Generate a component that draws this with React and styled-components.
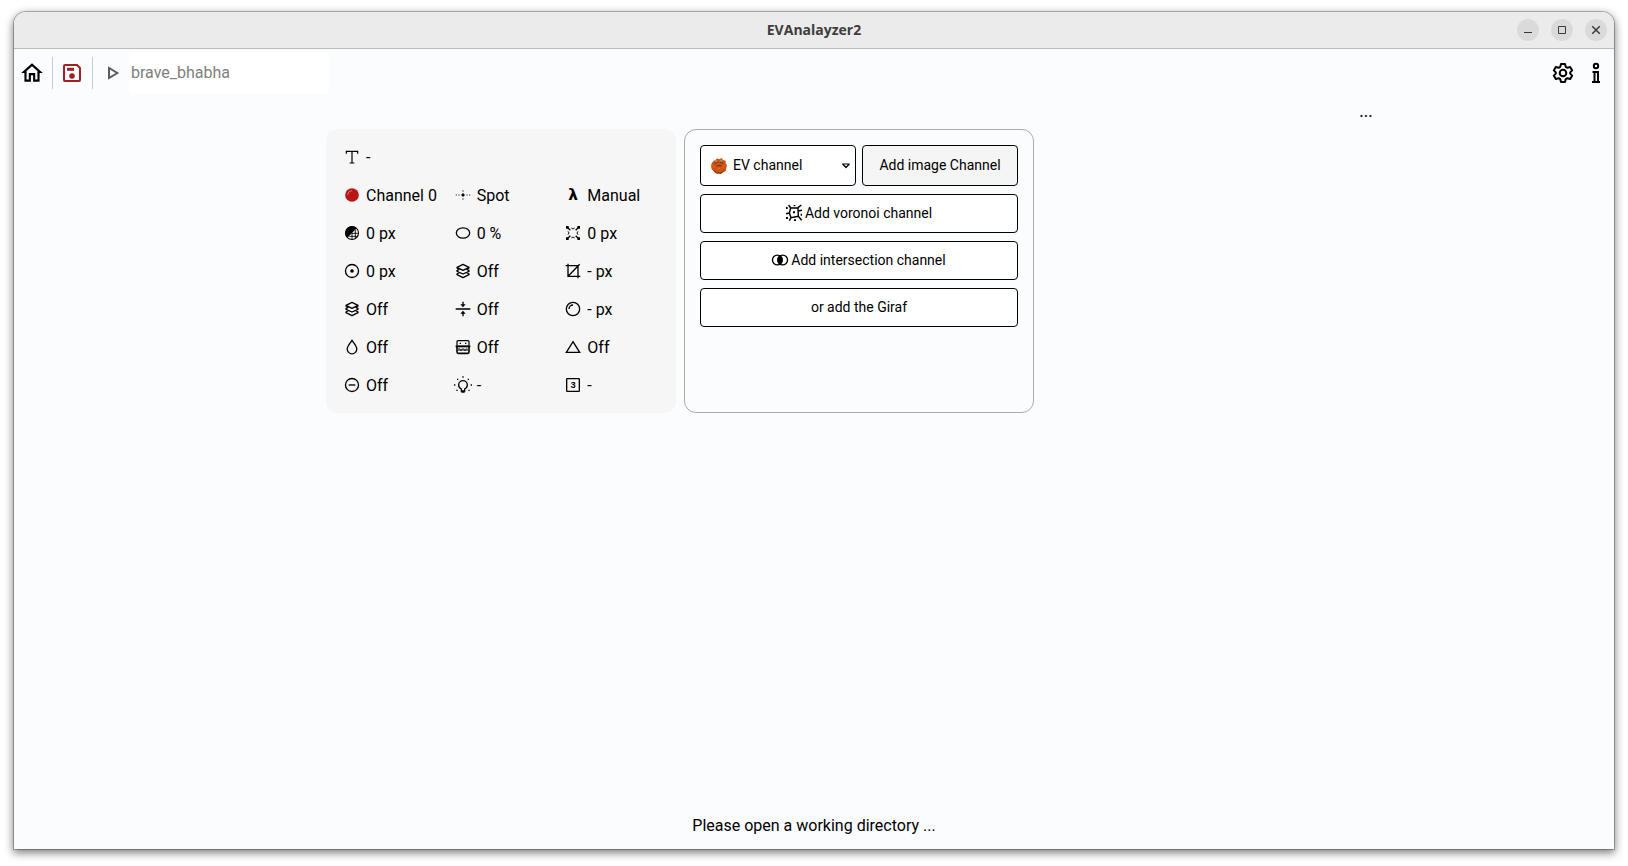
import React from "react";
import styled, { createGlobalStyle } from "styled-components";

const GlobalStyle = createGlobalStyle`
  *, *::before, *::after { box-sizing: border-box; }
  html, body, #root { height: 100%; }
  body { margin: 0; background: #fff; color: #000; font-family: Roboto, "Liberation Sans", sans-serif; font-size: 16px; }
  button, input, select { font: inherit; color: inherit; }
`;

const Desktop = styled.div`
  min-height: 100%;
  padding: 12px 14px 17px;
  display: flex;
`;

const Window = styled.div`
  flex: 1;
  display: flex;
  flex-direction: column;
  background: #fbfcfe;
  border-radius: 12px 12px 0 0;
  box-shadow: 0 0 0 1px rgba(0, 0, 0, 0.25), 0 3px 9px 1px rgba(0, 0, 0, 0.5);
`;

const TitleBar = styled.header`
  display: grid;
  grid-template-columns: 1fr auto 1fr;
  align-items: center;
  height: 37px;
  padding: 0 7px;
  background: #ebebeb;
  border-bottom: 1px solid #bcbcbc;
  border-radius: 12px 12px 0 0;
`;

const WindowTitle = styled.h1`
  grid-column: 2;
  margin: 0;
  font: 700 14px/20px "Open Sans", "Noto Sans", sans-serif;
  color: #3d3d3d;
`;

const WindowControls = styled.div`
  display: flex;
  justify-content: flex-end;
  gap: 12px;
`;

const WindowButton = styled.button`
  display: grid;
  place-items: center;
  width: 22px;
  height: 22px;
  padding: 0;
  border: 0;
  border-radius: 50%;
  background: #dadada;
  color: #3a3a3a;
`;

const Toolbar = styled.nav`
  display: flex;
  align-items: center;
  height: 47px;
`;

const ToolButton = styled.button`
  display: grid;
  place-items: center;
  width: ${(p) => p.$width || 38}px;
  height: 32px;
  padding: 0 ${(p) => (p.$divided ? 2 : 0)}px 0 0;
  border: 0;
  border-right: ${(p) => (p.$divided ? "1px solid #ccc" : "0")};
  background: none;
  color: ${(p) => p.$color || "#000"};
`;

const NameInput = styled.input`
  width: 200px;
  height: 41px;
  padding: 0 2px;
  border: 0;
  border-radius: 4px;
  background: #fff;
  &::placeholder { color: #808080; opacity: 1; }
`;

const Spacer = styled.div`
  flex: 1;
`;

const Workspace = styled.main`
  flex: 1;
  display: grid;
  grid-template-columns: 312px minmax(0, 1fr) 496px;
  padding-top: 8px;
`;

const Cards = styled.section`
  grid-column: 2;
  display: flex;
  flex-wrap: wrap;
  align-content: flex-start;
  gap: 8px;
  padding-top: 25px;
`;

const SidePanel = styled.aside`
  text-align: center;
  color: #223;
  font-weight: 500;
  line-height: 16px;
`;

const ChannelCard = styled.article`
  width: 350px;
  height: 284px;
  padding: 9px 0 9px 18px;
  border-radius: 12px;
  background: #f6f6f6;
`;

const Properties = styled.ul`
  display: grid;
  grid-template-columns: repeat(3, 1fr);
  grid-auto-rows: 38px;
  align-items: center;
  margin: 0;
  padding: 0;
  list-style: none;
`;

const Property = styled.li`
  grid-column: ${(p) => (p.$wide ? "1 / -1" : "auto")};
  display: flex;
  align-items: center;
  gap: 6px;
  white-space: nowrap;
`;

const AddCard = styled.form`
  display: flex;
  flex-direction: column;
  gap: 8px;
  width: 350px;
  height: 284px;
  padding: 15px;
  border: 1px solid #a9abad;
  border-radius: 12px;
  font-size: 14px;
`;

const Pair = styled.div`
  display: grid;
  grid-template-columns: 1fr 1fr;
  gap: 6px;
  height: 41px;
`;

const ActionButton = styled.button`
  display: flex;
  align-items: center;
  justify-content: center;
  gap: 3px;
  height: ${(p) => (p.$shaded ? 41 : 39)}px;
  padding: 0 0 2px;
  border: 1px solid #000;
  border-radius: 4px;
  background: ${(p) => (p.$shaded ? "#f5f5f5" : "#fff")};
`;

const SelectBox = styled.div`
  position: relative;
`;

const Select = styled.select`
  appearance: none;
  width: 100%;
  height: 100%;
  padding: 0 24px 2px 32px;
  border: 1px solid #000;
  border-radius: 4px;
  background: #fff;
`;

const SelectMark = styled.span`
  position: absolute;
  top: 0;
  bottom: 0;
  ${(p) => p.$side}: ${(p) => (p.$side === "left" ? 11 : 6)}px;
  display: flex;
  align-items: center;
  pointer-events: none;
`;

const Status = styled.footer`
  padding: 0 16px 13px;
  text-align: center;
  line-height: 20px;
`;

const Svg = styled.svg`
  display: block;
  flex: none;
  overflow: visible;
`;

const Icon = ({ size = 16, sw = 2, fill = "none", children }) => (
  <Svg width={size} height={size} viewBox="0 0 24 24" fill={fill} stroke={fill === "none" ? "currentColor" : "none"} strokeWidth={sw} aria-hidden="true">
    {children}
  </Svg>
);

const icons = {
  text: (
    <Icon sw={1.8}>
      <path d="M3.5 7V3.5H20.5V7M12 3.5V21M8.5 21H15.5" />
    </Icon>
  ),
  ball: (
    <Icon>
      <circle cx="12" cy="12" r="10.3" fill="#b71717" stroke="none" />
      <path d="M5.3 11.5A7 7 0 0 1 11.5 5.3" stroke="#e07070" strokeWidth="1.5" strokeLinecap="round" />
    </Icon>
  ),
  spot: (
    <Icon>
      <path d="M1 12H3M5 12H7M9 12H15M17 12H19M21 12H23M12 5V7M12 9V15M12 17V19" strokeWidth="1.6" opacity=".75" />
      <circle cx="12" cy="12" r="2" fill="currentColor" stroke="none" />
    </Icon>
  ),
  lambda: (
    <Icon fill="currentColor">
      <text x="12" y="20" textAnchor="middle" fontFamily="DejaVu Sans, sans-serif" fontWeight="700" fontSize="23">λ</text>
    </Icon>
  ),
  threshold: (
    <Icon>
      <circle cx="12" cy="12" r="9.8" strokeWidth="1.6" />
      <path d="M19 5A9.9 9.9 0 1 0 5 19Z" fill="currentColor" stroke="none" />
      <path d="M17 7V20M12 12V21.5M8 17H20.5M12 12.5H21.5" strokeWidth="1.3" />
    </Icon>
  ),
  ellipse: (
    <Icon>
      <ellipse cx="12" cy="12" rx="10" ry="7.8" />
    </Icon>
  ),
  snap: (
    <Icon>
      <path d="M3 3L8 8M21 3L16 8M3 21L8 16M21 21L16 16" strokeWidth="2" />
      <path d="M9.500 4.500L12 6L14.500 4.500M9.500 19.500L12 18L14.500 19.500M4.500 9.500L6 12L4.500 14.500M19.500 9.500L18 12L19.500 14.500" strokeWidth="1.400" />
      <path d="M1.500 1.500H5.500V5.500H1.500ZM18.500 1.500H22.500V5.500H18.500ZM1.500 18.500H5.500V22.500H1.500ZM18.500 18.500H22.500V22.500H18.500Z" fill="currentColor" stroke="none" />
    </Icon>
  ),
  target: (
    <Icon>
      <circle cx="12" cy="12" r="9.8" />
      <circle cx="12" cy="12" r="2.7" fill="currentColor" stroke="none" />
    </Icon>
  ),
  layers: (
    <Icon sw={2}>
      <path d="M12 2L21 6.500L12 11L3 6.500ZM3 6.500V7.500L6 9.500L3 11.500V12.500L12 16.500L21 12.500V11.500L18 9.500L21 7.500V6.500M6 14.500L3 16.500V17.500L12 22L21 17.500V16.500L18 14.500" strokeLinejoin="round" />
    </Icon>
  ),
  crop: (
    <Icon>
      <path d="M4.5 1V20H23M1 4H19.5V23M5 19.5L22 2" />
    </Icon>
  ),
  compress: (
    <Icon>
      <path d="M1 12H23M12 1V7M12 17V23" />
      <path d="M8 5H16L12 9.5ZM8 19H16L12 14.5Z" fill="currentColor" stroke="none" />
    </Icon>
  ),
  lens: (
    <Icon>
      <circle cx="12" cy="12" r="10" />
      <path d="M6 12A6 6 0 0 1 12 6" />
    </Icon>
  ),
  drop: (
    <Icon>
      <path d="M12 2C9.5 6 4.8 10.5 4.8 15A7.2 7.2 0 0 0 19.2 15C19.2 10.5 14.5 6 12 2Z" />
    </Icon>
  ),
  texture: (
    <Icon>
      <path d="M3 10V4Q3 2.500 4.500 2.500H19.500Q21 2.500 21 4V10M7 6.500H9M15 6.500H17" strokeWidth="1.800" />
      <path d="M1 9.500H23V12.500H1Z" fill="currentColor" stroke="none" />
      <path d="M3 12V19Q3 21.500 5 21.500H19Q21 21.500 21 19V12" strokeWidth="2.400" />
      <path d="M5 14L8 18L11 14.500L14 18L17 14.500L20 18M4 18L7 14.500L10 18L13 14.500L16 18L19 14.500" strokeWidth="1.500" opacity=".8" />
    </Icon>
  ),
  triangle: (
    <Icon>
      <path d="M12 4L22 20H2Z" />
    </Icon>
  ),
  minus: (
    <Icon>
      <circle cx="12" cy="12" r="9.8" />
      <path d="M7 12H17" />
    </Icon>
  ),
  bulb: (
    <Icon>
      <path d="M9.5 21V18C7 16.8 5.5 14.8 5.5 12A6.5 6.5 0 0 1 18.5 12C18.5 14.8 17 16.8 14.5 18V21ZM9.5 22.5H14.5" />
      <path d="M11 0H13M3 3.5H5M19 3.5H21M-1.500 12H.5M23.500 12H25.500M2 20H4M20 20H22" />
    </Icon>
  ),
  three: (
    <Icon>
      <rect x="2.500" y="2.500" width="19" height="19" rx="1" />
      <text x="12" y="17" textAnchor="middle" fontFamily="Liberation Sans, sans-serif" fontWeight="700" fontSize="14" fill="currentColor" stroke="none">3</text>
    </Icon>
  ),
  home: (
    <Icon size={26} fill="currentColor">
      <path d="M12 5.7L17 10.2V18H15V12H9V18H7V10.2L12 5.7M12 3L2 12H5V20H11V14H13V20H19V12H22Z" />
    </Icon>
  ),
  save: (
    <Icon size={24} sw={2}>
      <path d="M5 4H17L20 7V19Q20 20 19 20H5Q4 20 4 19V5Q4 4 5 4Z" />
      <path d="M7 8.3H14" strokeWidth="3" />
      <circle cx="12" cy="15" r="2.8" fill="currentColor" stroke="none" />
    </Icon>
  ),
  play: (
    <Icon size={24} sw={2}>
      <path d="M10 7V17L18.300 12Z" />
    </Icon>
  ),
  gear: (
    <Icon size={24} sw={2}>
      <path d="M10 3H14L14.7 5.8L16.4 6.8L19.2 6L21.2 9.4L19.2 11.4V12.6L21.2 14.6L19.2 18L16.4 17.2L14.7 18.2L14 21H10L9.3 18.2L7.6 17.2L4.8 18L2.8 14.6L4.8 12.6V11.4L2.8 9.4L4.8 6L7.6 6.8L9.3 5.8Z" strokeLinejoin="round" />
      <circle cx="12" cy="12" r="3.3" />
    </Icon>
  ),
  info: (
    <Icon size={24} sw={2}>
      <circle cx="12" cy="5" r="2.2" />
      <path d="M8.500 11H14V21M10.500 11V21M8 21H16" />
    </Icon>
  ),
  minimize: (
    <Icon size={12} sw={2}>
      <path d="M4 17H20" />
    </Icon>
  ),
  maximize: (
    <Icon size={12} sw={2}>
      <path d="M5 5H19V19H5Z" />
    </Icon>
  ),
  close: (
    <Icon size={12} sw={3}>
      <path d="M4.5 4.5L19.5 19.5M19.5 4.5L4.5 19.5" />
    </Icon>
  ),
  voronoi: (
    <Icon sw={2.2}>
      <path d="M7 4.500L18 4L18.500 17L7.500 19L5 12ZM7 4.500L4 0M18 4L23 0M18.500 17L23.500 23M7.500 19L5 23.500M5 12L0 13M18 9L24 8" />
      <path d="M10.500 9.500H13.500V12.500H10.500ZM0 3H2.500V6H0ZM11.500 0H14V2H11.500ZM0 18H3V21H0ZM12 21.500H15V24H12ZM22 13H24V16H22Z" fill="currentColor" stroke="none" />
    </Icon>
  ),
  intersect: (
    <Icon sw={2}>
      <circle cx="8" cy="12" r="7.3" />
      <circle cx="16" cy="12" r="7.3" />
      <path d="M12 6A7.300 7.300 0 0 1 12 18A7.300 7.300 0 0 1 12 6Z" fill="currentColor" />
    </Icon>
  ),
  ev: (
    <Icon>
      <path d="M4 4L7 3L9 .5L12 2L16 0L18 3L22 4L22 8L24 11L23 15L22 20L18 21L15 24L11 23L7 23L4 20L1 17L0 12L1 8Z" fill="#c9551a" stroke="none" />
      <path d="M3 17Q12 26 21 17L19 21L15 23.500H9L5 21Z" fill="#a33d0b" stroke="none" />
      <path d="M6 4.500H9M14 4H17" stroke="#9aa873" strokeWidth="2.500" />
      <path d="M5 8L10 6.500M13 6.500L19 8M8 12Q12 10.500 16 12" stroke="#823208" strokeWidth="1.500" />
      <path d="M3 11L6 15M18 14L21 10M10 16L14 15" stroke="#e2772c" strokeWidth="1.500" />
    </Icon>
  ),
  caret: (
    <Icon size={8} sw={3.600}>
      <path d="M2 6H22L12 16.500Z" strokeLinejoin="round" />
    </Icon>
  ),
};

const properties = [
  ["text", "-"],
  ["ball", "Channel 0"],
  ["spot", "Spot"],
  ["lambda", "Manual"],
  ["threshold", "0 px"],
  ["ellipse", "0 %"],
  ["snap", "0 px"],
  ["target", "0 px"],
  ["layers", "Off"],
  ["crop", "- px"],
  ["layers", "Off"],
  ["compress", "Off"],
  ["lens", "- px"],
  ["drop", "Off"],
  ["texture", "Off"],
  ["triangle", "Off"],
  ["minus", "Off"],
  ["bulb", "-"],
  ["three", "-"],
];

export default function App() {
  return (
    <Desktop>
      <GlobalStyle />
      <Window>
        <TitleBar>
          <WindowTitle>EVAnalayzer2</WindowTitle>
          <WindowControls>
            <WindowButton aria-label="Minimize">{icons.minimize}</WindowButton>
            <WindowButton aria-label="Maximize">{icons.maximize}</WindowButton>
            <WindowButton aria-label="Close">{icons.close}</WindowButton>
          </WindowControls>
        </TitleBar>
        <Toolbar>
          <ToolButton $width={39} $divided aria-label="Home">{icons.home}</ToolButton>
          <ToolButton $width={40} $divided $color="#a31f22" aria-label="Save">{icons.save}</ToolButton>
          <ToolButton $width={36} $color="#5c5c5c" aria-label="Run">{icons.play}</ToolButton>
          <NameInput aria-label="Job name" placeholder="brave_bhabha" />
          <Spacer />
          <ToolButton $width={30} aria-label="Settings">{icons.gear}</ToolButton>
          <ToolButton $width={36} aria-label="About">{icons.info}</ToolButton>
        </Toolbar>
        <Workspace>
          <Cards>
            <ChannelCard>
              <Properties>
                {properties.map(([icon, value], i) => (
                  <Property key={i} $wide={i === 0}>
                    {icons[icon]}
                    {value}
                  </Property>
                ))}
              </Properties>
            </ChannelCard>
            <AddCard onSubmit={(e) => e.preventDefault()}>
              <Pair>
                <SelectBox>
                  <Select aria-label="Channel type" defaultValue="ev">
                    <option value="ev">EV channel</option>
                  </Select>
                  <SelectMark $side="left">{icons.ev}</SelectMark>
                  <SelectMark $side="right">{icons.caret}</SelectMark>
                </SelectBox>
                <ActionButton type="button" $shaded>Add image Channel</ActionButton>
              </Pair>
              <ActionButton type="button">{icons.voronoi}Add voronoi channel</ActionButton>
              <ActionButton type="button">{icons.intersect}Add intersection channel</ActionButton>
              <ActionButton type="button">or add the Giraf</ActionButton>
            </AddCard>
          </Cards>
          <SidePanel>...</SidePanel>
        </Workspace>
        <Status>Please open a working directory ...</Status>
      </Window>
    </Desktop>
  );
}
